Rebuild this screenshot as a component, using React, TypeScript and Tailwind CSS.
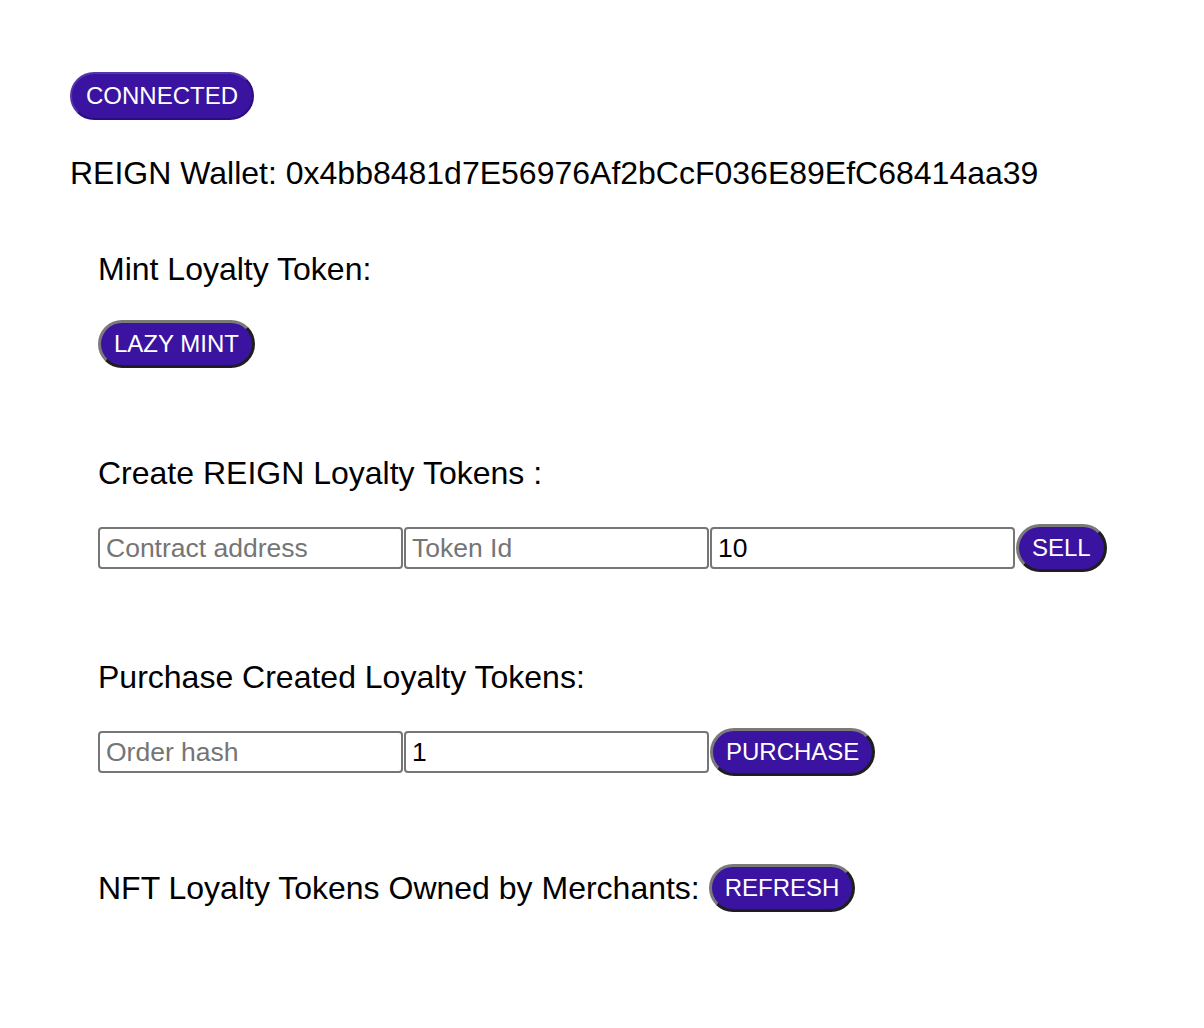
import React from 'react'

const pill =
  'h-[48px] rounded-full bg-[#3b13a1] text-white text-[24px] leading-none px-[13px] border-[3px] border-solid border-t-[#7a7a7a] border-l-[#7a7a7a] border-r-[#1e1e1e] border-b-[#1e1e1e]'

const field =
  'w-[305px] h-[42px] border-2 border-[#767676] rounded-[4px] px-[6px] text-[26.5px] text-black placeholder:text-[#757575] bg-white outline-none'

export default function App() {
  return (
    <div className="min-h-screen bg-white pl-[70px] pt-[72px] font-['Liberation_Sans',Arial,sans-serif] text-black">
      <button className="h-[48px] rounded-full bg-[#3b13a1] text-white text-[24px] leading-none px-[14px] border-2 border-solid border-t-[#5535a8] border-l-[#5535a8] border-r-[#2c0c80] border-b-[#2c0c80]">
        CONNECTED
      </button>

      <p className="mt-[35px] text-[32px] leading-[36px]">
        REIGN Wallet: 0x4bb8481d7E56976Af2bCcF036E89EfC68414aa39
      </p>

      <div className="pl-[28px]">
        {/* mint */}
        <h2 className="mt-[60px] text-[32px] leading-[36px]">Mint Loyalty Token:</h2>
        <button className={`${pill} mt-[33px]`}>LAZY MINT</button>

        {/* sell */}
        <h2 className="mt-[87px] text-[32px] leading-[36px]">Create REIGN Loyalty Tokens :</h2>
        <div className="mt-[33px] flex items-center gap-[1px]">
          <input className={field} placeholder="Contract address" />
          <input className={field} placeholder="Token Id" />
          <input className={field} defaultValue="10" />
          <button className={pill}>SELL</button>
        </div>

        {/* purchase */}
        <h2 className="mt-[87px] text-[32px] leading-[36px]">Purchase Created Loyalty Tokens:</h2>
        <div className="mt-[33px] flex items-center gap-[1px]">
          <input className={field} placeholder="Order hash" />
          <input className={field} defaultValue="1" />
          <button className={pill}>PURCHASE</button>
        </div>

        {/* owned */}
        <div className="mt-[88px] flex items-center gap-[9px]">
          <span className="text-[32px] leading-[36px]">NFT Loyalty Tokens Owned by Merchants:</span>
          <button className={pill}>REFRESH</button>
        </div>
      </div>
    </div>
  )
}
